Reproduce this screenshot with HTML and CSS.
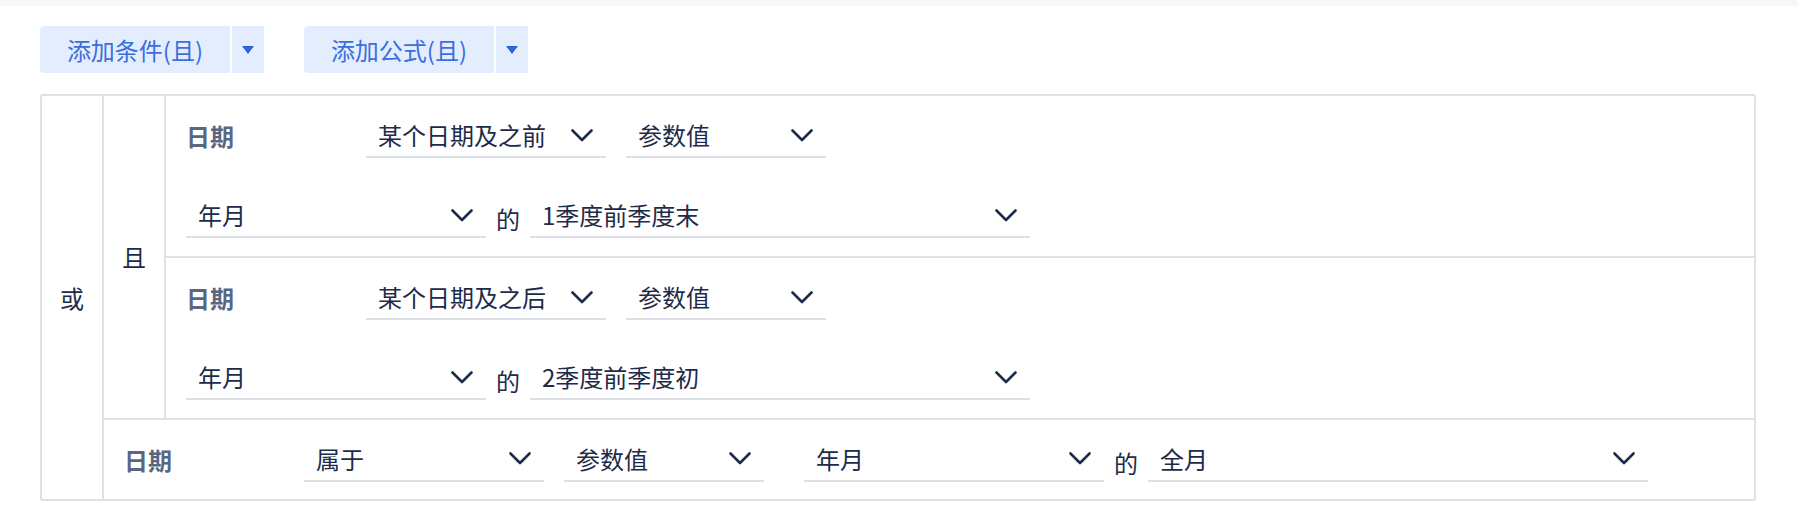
FILE: index.html
```html
<!DOCTYPE html>
<html lang="zh-CN">
<head>
<meta charset="utf-8">
<title>条件</title>
<link rel="stylesheet" href="styles.css">
</head>
<body>
<div class="topbar"></div>
<div class="page">
  <div class="toolbar">
    <div class="split-btn">
      <button class="btn-main">添加条件(且)</button>
      <button class="btn-drop"><svg class="caret" viewBox="0 0 12 8"><path d="M0 0 H12 L6 8 Z"/></svg></button>
    </div>
    <div class="split-btn">
      <button class="btn-main">添加公式(且)</button>
      <button class="btn-drop"><svg class="caret" viewBox="0 0 12 8"><path d="M0 0 H12 L6 8 Z"/></svg></button>
    </div>
  </div>

  <div class="tree">
    <div class="op op-or"><span>或</span></div>
    <div class="branch">
      <div class="group">
        <div class="op op-and"><span>且</span></div>
        <div class="conds">
          <div class="cond">
            <div class="line">
              <div class="label">日期</div>
              <div class="select w240"><span>某个日期及之前</span><svg class="chev" viewBox="0 0 22 13"><path d="M1.5 1.5 L11 11 L20.5 1.5"/></svg></div>
              <div class="select w200 gap"><span>参数值</span><svg class="chev" viewBox="0 0 22 13"><path d="M1.5 1.5 L11 11 L20.5 1.5"/></svg></div>
            </div>
            <div class="line">
              <div class="select w300"><span>年月</span><svg class="chev" viewBox="0 0 22 13"><path d="M1.5 1.5 L11 11 L20.5 1.5"/></svg></div>
              <div class="of">的</div>
              <div class="select w500"><span>1季度前季度末</span><svg class="chev" viewBox="0 0 22 13"><path d="M1.5 1.5 L11 11 L20.5 1.5"/></svg></div>
            </div>
          </div>
          <div class="cond">
            <div class="line">
              <div class="label">日期</div>
              <div class="select w240"><span>某个日期及之后</span><svg class="chev" viewBox="0 0 22 13"><path d="M1.5 1.5 L11 11 L20.5 1.5"/></svg></div>
              <div class="select w200 gap"><span>参数值</span><svg class="chev" viewBox="0 0 22 13"><path d="M1.5 1.5 L11 11 L20.5 1.5"/></svg></div>
            </div>
            <div class="line">
              <div class="select w300"><span>年月</span><svg class="chev" viewBox="0 0 22 13"><path d="M1.5 1.5 L11 11 L20.5 1.5"/></svg></div>
              <div class="of">的</div>
              <div class="select w500"><span>2季度前季度初</span><svg class="chev" viewBox="0 0 22 13"><path d="M1.5 1.5 L11 11 L20.5 1.5"/></svg></div>
            </div>
          </div>
        </div>
      </div>
      <div class="cond single">
        <div class="line last">
          <div class="label">日期</div>
          <div class="select w240"><span>属于</span><svg class="chev" viewBox="0 0 22 13"><path d="M1.5 1.5 L11 11 L20.5 1.5"/></svg></div>
          <div class="select w200 gap"><span>参数值</span><svg class="chev" viewBox="0 0 22 13"><path d="M1.5 1.5 L11 11 L20.5 1.5"/></svg></div>
          <div class="select w300 gap2"><span>年月</span><svg class="chev" viewBox="0 0 22 13"><path d="M1.5 1.5 L11 11 L20.5 1.5"/></svg></div>
          <div class="of">的</div>
          <div class="select w500"><span>全月</span><svg class="chev" viewBox="0 0 22 13"><path d="M1.5 1.5 L11 11 L20.5 1.5"/></svg></div>
        </div>
      </div>
    </div>
  </div>
</div>
</body>
</html>
```

FILE: styles.css
```css
* {
  box-sizing: border-box;
}

html, body {
  margin: 0;
  padding: 0;
  background: #ffffff;
}

body {
  font-family: "Noto Sans CJK SC", "Noto Sans", sans-serif;
  font-size: 24px;
  color: #1d2b4a;
  width: 1798px;
  height: 508px;
  overflow: hidden;
}

.topbar {
  height: 6px;
  background: #f6f7fb;
}

.page {
  padding: 20px 42px 0 40px;
}

.toolbar {
  display: flex;
  gap: 40px;
  height: 47px;
}

.split-btn {
  display: flex;
  gap: 2px;
}

.split-btn button {
  border: none;
  margin: 0;
  padding: 0;
  background: #e3edfd;
  color: #3b6edf;
  font-family: inherit;
  font-size: 24px;
  line-height: 47px;
  height: 47px;
}

.btn-main {
  width: 190px;
  border-radius: 4px 0 0 4px;
  padding-bottom: 2px;
}

.btn-drop {
  width: 32px;
  display: flex;
  align-items: center;
  justify-content: center;
}

.caret {
  display: block;
  width: 12px;
  height: 8px;
  fill: #2f63d9;
  margin-top: 1px;
}

.tree {
  margin-top: 21px;
  display: flex;
  border: 2px solid #dde0e6;
  border-radius: 3px;
}

.op {
  width: 62px;
  flex: none;
  border-right: 2px solid #dde0e6;
  display: flex;
  align-items: center;
  justify-content: center;
  line-height: 1;
  color: #1d2b4a;
}

.branch {
  flex: 1;
  display: flex;
  flex-direction: column;
}

.group {
  display: flex;
  border-bottom: 2px solid #dde0e6;
}

.conds {
  flex: 1;
  display: flex;
  flex-direction: column;
}

.cond + .cond {
  border-top: 2px solid #dde0e6;
}

.line {
  height: 80px;
  display: flex;
  align-items: center;
  padding-left: 20px;
}

.line.last {
  height: 79px;
}

.label {
  width: 180px;
  flex: none;
  font-weight: 700;
  color: #5a6781;
  line-height: 1;
}

.select {
  flex: none;
  height: 44px;
  border-bottom: 2px solid #dcdfe6;
  display: flex;
  align-items: center;
  justify-content: space-between;
  padding: 0 13px 0 12px;
  line-height: 1;
}

.select span {
  white-space: nowrap;
}

.w240 { width: 240px; }
.w200 { width: 200px; }
.w300 { width: 300px; }
.w500 { width: 500px; }

.gap { margin-left: 20px; }
.gap2 { margin-left: 40px; }

.of {
  flex: none;
  margin: 0 10px 0 10px;
  line-height: 1;
  padding-top: 6px;
}

.chev {
  width: 22px;
  height: 13px;
  flex: none;
  fill: none;
  stroke: #1d2b4a;
  stroke-width: 2.6;
  stroke-linecap: round;
  stroke-linejoin: round;
}
```
